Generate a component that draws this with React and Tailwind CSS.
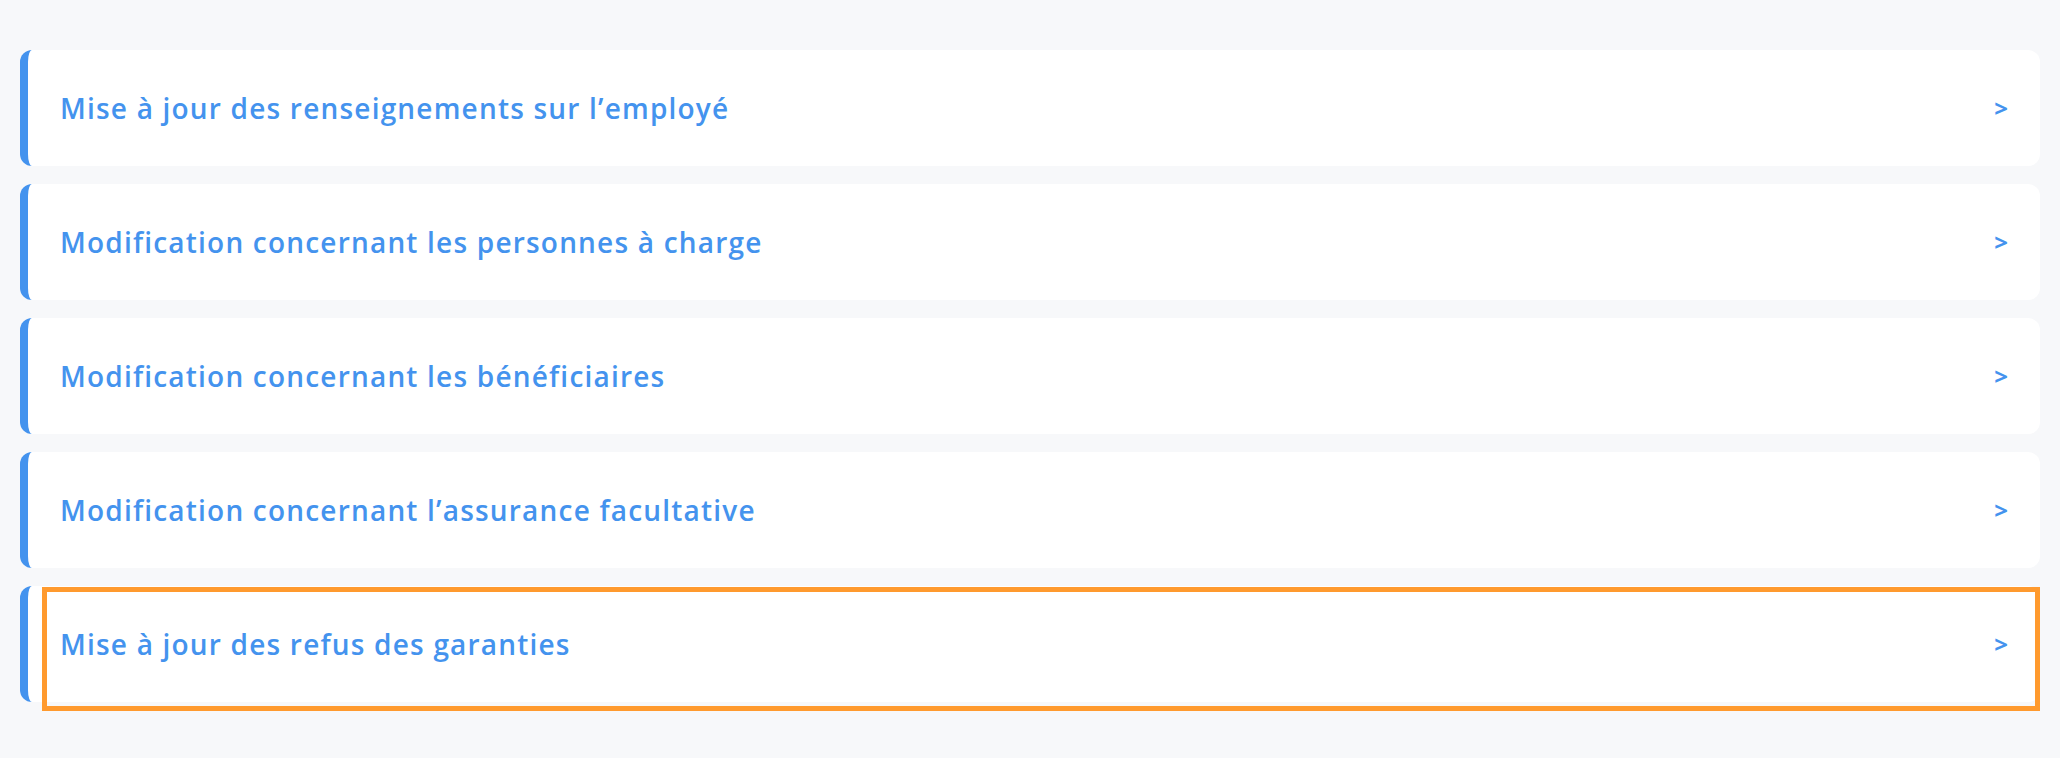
import React from 'react';

const items = [
  'Mise à jour des renseignements sur l’employé',
  'Modification concernant les personnes à charge',
  'Modification concernant les bénéficiaires',
  'Modification concernant l’assurance facultative',
  'Mise à jour des refus des garanties',
];

const Row = ({ label, focused }) => (
  <div className="relative flex h-[116px] items-center justify-between rounded-[12px] border-l-[8px] border-[#4493ee] bg-white pl-[32px] pr-[32px]">
    <span className="text-[28px] font-semibold tracking-[1.2px] text-[#4493ee]">{label}</span>
    <span className="text-[24px] font-bold text-[#4493ee]">&gt;</span>
    {focused && (
      <div className="pointer-events-none absolute left-[14px] right-0 top-[1px] bottom-[-9px] border-[5px] border-[#ff9a2e]" />
    )}
  </div>
);

export default function App() {
  return (
    <div className="min-h-[758px] w-full bg-[#f7f8fa] px-[20px] pt-[50px] font-['Open_Sans',sans-serif]">
      <div className="flex flex-col gap-[18px]">
        {items.map((label, i) => (
          <Row key={label} label={label} focused={i === items.length - 1} />
        ))}
      </div>
    </div>
  );
}
